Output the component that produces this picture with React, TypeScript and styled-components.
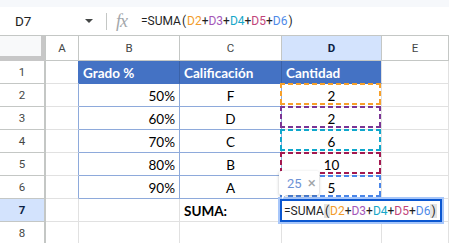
import styled, { createGlobalStyle, css } from 'styled-components';

const GlobalStyle = createGlobalStyle`
  html, body {
    margin: 0;
    padding: 0;
    background: #ffffff;
  }
  * {
    box-sizing: border-box;
  }
`;

const GRID = '#e1e1e1';
const HEAD_LINE = '#c4c7c5';
const TABLE_LINE = '#8eaadb';
const TABLE_HEAD = '#4472c4';
const SELECTED = '#d3e3fd';

const Page = styled.div`
  width: 449px;
  height: 243px;
  overflow: hidden;
  font-family: Roboto, 'Liberation Sans', sans-serif;
  background: #fff;
`;

const TopStrip = styled.div`
  height: 7px;
  background: #f6f8fb;
`;

const FormulaBar = styled.div`
  height: 29px;
  display: flex;
  align-items: center;
  border-bottom: 1px solid ${HEAD_LINE};
  color: #1f1f1f;
`;

const NameBox = styled.div`
  width: 80px;
  padding-left: 15px;
  font-size: 13.5px;
`;

const Caret = styled.div`
  width: 0;
  height: 0;
  margin-left: 5px;
  border-left: 4.5px solid transparent;
  border-right: 4.5px solid transparent;
  border-top: 4.5px solid #444746;
`;

const Divider = styled.div`
  width: 1px;
  height: 17px;
  margin-left: 13px;
  background: ${HEAD_LINE};
`;

const FxIcon = styled.span`
  margin-left: 9px;
  width: 18px;
  font-family: 'Liberation Serif', serif;
  font-style: italic;
  font-size: 18px;
  color: #a3a7ab;
  letter-spacing: -1px;
`;

const Formula = styled.div`
  margin-left: 7px;
  font-size: 12px;
  display: flex;
  align-items: center;
  white-space: pre;
`;

const Ref = styled.span<{ $color: string }>`
  color: ${(p) => p.$color};
`;

const Paren = styled.span<{ $marked?: boolean }>`
  padding: 0 1px;
  ${(p) =>
    p.$marked &&
    css`
      background: #e3e3e3;
    `}
`;

const Grid = styled.div`
  display: grid;
  grid-template-columns: 46px 33px 101px 102px 100px 67px;
  grid-template-rows: 25px repeat(8, 23px);
`;

const Corner = styled.div`
  background: #f8f9fa;
  box-shadow: inset -4px -5px 0 #c7c7c7;
  border-right: 1px solid ${HEAD_LINE};
`;

const ColHead = styled.div<{ $active?: boolean }>`
  display: flex;
  align-items: center;
  justify-content: center;
  font-size: 11.5px;
  color: ${(p) => (p.$active ? '#0b1f45' : '#444746')};
  font-weight: ${(p) => (p.$active ? 700 : 400)};
  background: ${(p) => (p.$active ? SELECTED : '#fff')};
  border-right: 1px solid ${HEAD_LINE};
  border-bottom: 1px solid ${HEAD_LINE};
`;

const RowHead = styled.div<{ $active?: boolean }>`
  display: flex;
  align-items: center;
  justify-content: center;
  font-size: 11.5px;
  color: ${(p) => (p.$active ? '#0b1f45' : '#444746')};
  font-weight: ${(p) => (p.$active ? 700 : 400)};
  background: ${(p) => (p.$active ? SELECTED : '#fff')};
  border-right: 2px solid ${HEAD_LINE};
  border-bottom: 1px solid ${HEAD_LINE};
`;

type Kind = 'plain' | 'head' | 'body';

const Cell = styled.div<{
  $kind: Kind;
  $align: 'left' | 'center' | 'right';
  $bold?: boolean;
  $rightLine?: string;
}>`
  position: relative;
  display: flex;
  align-items: center;
  justify-content: ${(p) =>
    p.$align === 'left' ? 'flex-start' : p.$align === 'right' ? 'flex-end' : 'center'};
  padding: 1px 4px 0 4px;
  font-family: Lato, 'Liberation Sans', sans-serif;
  font-size: 13.5px;
  font-weight: ${(p) => (p.$bold ? 700 : 400)};
  color: ${(p) => (p.$kind === 'head' ? '#fff' : '#000')};
  background: ${(p) => (p.$kind === 'head' ? TABLE_HEAD : '#fff')};
  border-right: 1px solid
    ${(p) => p.$rightLine ?? (p.$kind === 'head' ? '#3a62a8' : p.$kind === 'body' ? TABLE_LINE : GRID)};
  border-bottom: 1px solid
    ${(p) => (p.$kind === 'head' ? TABLE_HEAD : p.$kind === 'body' ? TABLE_LINE : GRID)};
`;

const DashBox = styled.div<{ $color: string }>`
  position: absolute;
  top: -1px;
  left: -2px;
  right: 0;
  bottom: 1px;
  z-index: 1;
  pointer-events: none;
  background:
    repeating-linear-gradient(90deg, ${(p) => p.$color} 0 5px, transparent 5px 8px) top / 100% 2px no-repeat,
    repeating-linear-gradient(90deg, ${(p) => p.$color} 0 5px, transparent 5px 8px) bottom / 100% 2px no-repeat,
    repeating-linear-gradient(180deg, ${(p) => p.$color} 0 5px, transparent 5px 8px) left / 2px 100% no-repeat,
    repeating-linear-gradient(180deg, ${(p) => p.$color} 0 5px, transparent 5px 8px) right / 2px 100% no-repeat;
`;

const Editor = styled.div`
  position: absolute;
  top: 0;
  left: -2px;
  width: 162px;
  height: 23px;
  z-index: 2;
  display: flex;
  align-items: center;
  padding-left: 2px;
  background: #fff;
  border: 2px solid #0b57d0;
  box-shadow: 0 0 0 2px #a8c7fa;
  font-family: Roboto, 'Liberation Sans', sans-serif;
  font-size: 12px;
  color: #1f1f1f;
  white-space: pre;
`;

const Hint = styled.div`
  position: absolute;
  top: -28px;
  left: -3px;
  width: 40px;
  height: 24px;
  z-index: 3;
  display: flex;
  align-items: center;
  gap: 6px;
  padding-left: 8px;
  background: #fff;
  border-radius: 2px;
  box-shadow: 0 1px 3px rgba(60, 64, 67, 0.35);
  font-family: Roboto, 'Liberation Sans', sans-serif;

  &::after {
    content: '';
    position: absolute;
    left: 3px;
    bottom: -4px;
    border-right: 5px solid transparent;
    border-top: 5px solid #fff;
  }
`;

const HintValue = styled.span`
  font-size: 13px;
  color: #6d93d6;
`;

const HintClose = styled.span`
  font-size: 15px;
  color: #a0a4a8;
`;

const refs = [
  { label: 'D2', color: '#f29b2a' },
  { label: 'D3', color: '#a456b8' },
  { label: 'D4', color: '#17a7c9' },
  { label: 'D5', color: '#c2457a' },
  { label: 'D6', color: '#4f8ae8' },
];

const dashColors = ['#f7a02a', '#7b3595', '#0fa7cc', '#a3184f', '#4a86e8'];

function FormulaText({ marked }: { marked?: boolean }) {
  return (
    <>
      =SUMA<Paren $marked={marked}>(</Paren>
      {refs.map((r, i) => (
        <span key={r.label}>
          {i > 0 && '+'}
          <Ref $color={r.color}>{r.label}</Ref>
        </span>
      ))}
      <Paren $marked={marked}>)</Paren>
    </>
  );
}

const data: [string, string, string][] = [
  ['50%', 'F', '2'],
  ['60%', 'D', '2'],
  ['70%', 'C', '6'],
  ['80%', 'B', '10'],
  ['90%', 'A', '5'],
];

function DataRow({
  n,
  grade,
  mark,
  qty,
  dash,
}: {
  n: number;
  grade: string;
  mark: string;
  qty: string;
  dash: string;
}) {
  return (
    <>
      <RowHead>{n}</RowHead>
      <Cell $kind="plain" $align="left" $rightLine={TABLE_LINE} />
      <Cell $kind="body" $align="right">
        {grade}
      </Cell>
      <Cell $kind="body" $align="center">
        {mark}
      </Cell>
      <Cell $kind="plain" $align="center">
        {qty}
        <DashBox $color={dash} />
      </Cell>
      <Cell $kind="plain" $align="left" />
    </>
  );
}

export default function App() {
  const columns = ['A', 'B', 'C', 'D', 'E'];
  return (
    <Page>
      <GlobalStyle />
      <TopStrip />
      <FormulaBar>
        <NameBox>D7</NameBox>
        <Caret />
        <Divider />
        <FxIcon>fx</FxIcon>
        <Formula>
          <FormulaText />
        </Formula>
      </FormulaBar>
      <Grid>
        <Corner />
        {columns.map((c) => (
          <ColHead key={c} $active={c === 'D'}>
            {c}
          </ColHead>
        ))}

        <RowHead>1</RowHead>
        <Cell $kind="plain" $align="left" $rightLine={TABLE_HEAD} />
        <Cell $kind="head" $align="left" $bold>
          Grado %
        </Cell>
        <Cell $kind="head" $align="left" $bold>
          Calificación
        </Cell>
        <Cell $kind="head" $align="left" $bold $rightLine={GRID}>
          Cantidad
        </Cell>
        <Cell $kind="plain" $align="left" />

        {data.map(([grade, mark, qty], i) => (
          <DataRow key={i} n={i + 2} grade={grade} mark={mark} qty={qty} dash={dashColors[i]} />
        ))}

        <RowHead $active>7</RowHead>
        <Cell $kind="plain" $align="left" />
        <Cell $kind="plain" $align="left" />
        <Cell $kind="plain" $align="left" $bold>
          SUMA:
        </Cell>
        <Cell $kind="plain" $align="left">
          <Hint>
            <HintValue>25</HintValue>
            <HintClose>×</HintClose>
          </Hint>
          <Editor>
            <FormulaText marked />
          </Editor>
        </Cell>
        <Cell $kind="plain" $align="left" />

        <RowHead>8</RowHead>
        <Cell $kind="plain" $align="left" />
        <Cell $kind="plain" $align="left" />
        <Cell $kind="plain" $align="left" />
        <Cell $kind="plain" $align="left" />
        <Cell $kind="plain" $align="left" />
      </Grid>
    </Page>
  );
}
